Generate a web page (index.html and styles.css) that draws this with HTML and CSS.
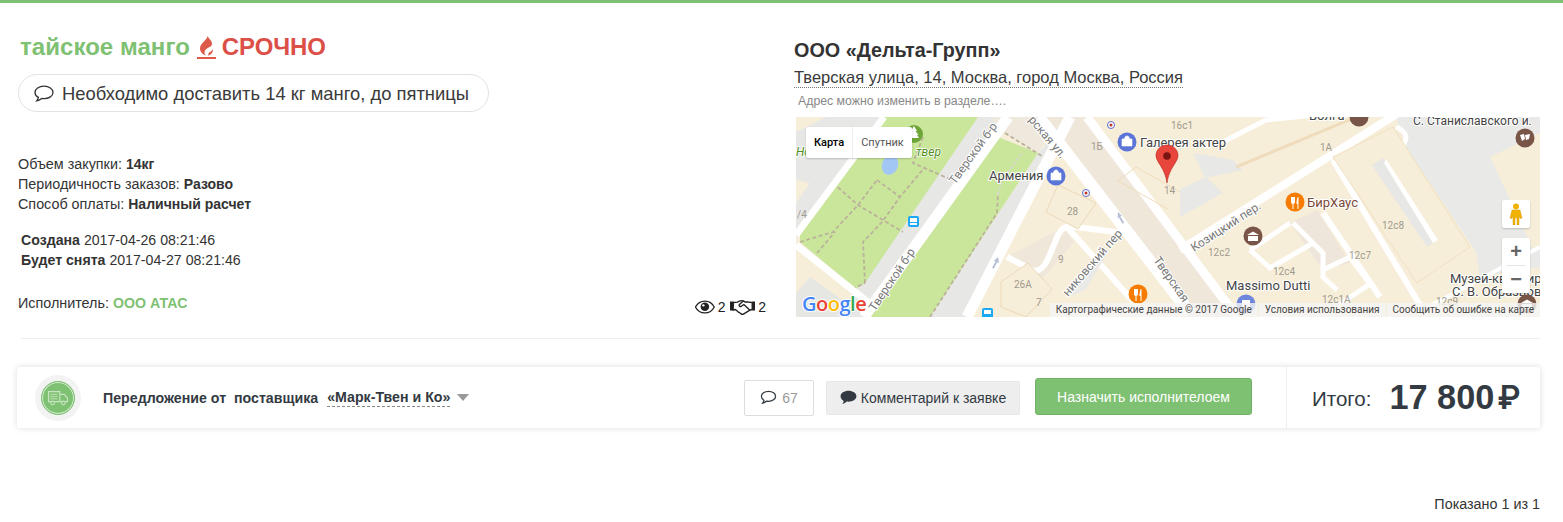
FILE: index.html
```html
<!DOCTYPE html>
<html lang="ru">
<head>
<meta charset="utf-8">
<title>тайское манго</title>
<link rel="stylesheet" href="styles.css">
</head>
<body>
<main class="page">
  <section class="order">
    <div class="order-info">
      <h1 class="title"><span class="title-name">тайское манго</span>
        <span class="flame-wrap"><svg class="flame" viewBox="0 0 16 20"><path d="M9.500 0C9.500 4 2 7 2 12.500 2 16 4.800 18.500 8 19.500 6 17.500 6 14.800 8 13.200 11 11 14 11 14 7.500 14 4.500 11 3 9.500 0z" fill="#dd5a4b"/><path d="M10 19.500c3-.4 5.200-2.800 5-6.500-.8 1.700-2.400 2.800-4 3.500-.5.900-.8 2-1 3z" fill="#dd5a4b"/></svg></span>
        <span class="urgent">СРОЧНО</span></h1>
      <div class="pill">
        <svg class="bubble" viewBox="0 0 20 18"><path d="M10 1.200c5 0 9 2.600 9 6.200s-4 6.200-9 6.200c-.8 0-1.600-.1-2.300-.2-1.200 1-2.800 2.100-5 2.500.8-1 1.500-2 1.700-3.500C2.300 11.300 1 9.500 1 7.400 1 3.800 5 1.200 10 1.200z" fill="none" stroke="#333" stroke-width="1.300"/></svg>
        <span class="pill-text">Необходимо доставить 14 кг манго, до пятницы</span>
      </div>
      <ul class="meta">
        <li>Объем закупки: <b>14кг</b></li>
        <li>Периодичность заказов: <b>Разово</b></li>
        <li>Способ оплаты: <b>Наличный расчет</b></li>
      </ul>
      <ul class="dates">
        <li><b>Создана</b> 2017-04-26 08:21:46</li>
        <li><b>Будет снята</b> 2017-04-27 08:21:46</li>
      </ul>
      <div class="performer-row">
        <div>Исполнитель: <a class="performer">ООО АТАС</a></div>
        <div class="stats">
          <svg class="eye" viewBox="0 0 20 14"><path d="M10 1C5.500 1 2 4 .5 7 2 10 5.500 13 10 13s8-3 9.500-6C18 4 14.500 1 10 1z" fill="none" stroke="#222" stroke-width="1.300"/><circle cx="10" cy="6.800" r="4.300" fill="#222"/><circle cx="8.500" cy="5.300" r="1.200" fill="#fff"/></svg>
          <span>2</span>
          <svg class="shake" viewBox="0 0 26 16"><path d="M0 2.500h3.500v9H0zM22.500 2.500H26v9h-3.500z" fill="#222"/><path d="M3.500 3.500l4-.5c2-1 4-2.200 6-1.200l2 1.200h3l4 .5v7l-2 .5-6.500 4c-1.200.8-2.500.3-3-.4l-2-1.100-3.500-3-2.500.5zM13.500 2l-4 3.500c-.8 1.200.6 2.500 2 1.800l2.500-1.800 6 5.500" fill="none" stroke="#222" stroke-width="1.400" stroke-linejoin="round"/></svg>
          <span>2</span>
        </div>
      </div>
    </div>
    <div class="order-place">
      <h2 class="company">ООО «Дельта-Групп»</h2>
      <div class="address">Тверская улица, 14, Москва, город Москва, Россия</div>
      <p class="note">Адрес можно изменить в разделе….</p>
      <div class="map">
        <svg class="map-svg" viewBox="0 0 744 200" width="744" height="200">
          <rect width="744" height="200" fill="#f7eed9"/>
          <!-- grey verges and pale blocks -->
          <path d="M0 150L70 200H0z" fill="#e6e6e2"/>
          <path d="M0 15L30 0H88L0 120z" fill="#e7e7e5"/>
          <path d="M0 63L14 66 0 86z" fill="#f7eed9"/>
          <path d="M60 172L182 0H212L68 200H40z" fill="#e7e7e5"/>
          <path d="M134 200L242 36 274 0 171 200z" fill="#e7e7e5"/>
          <path d="M195 0H262L242 36 205 14z" fill="#efe8dc"/>
          <path d="M243 0H291L441 200H394z" fill="#efe7da"/>
          <path d="M600 0H744V200H690L680 135 610 30z" fill="#e9e9e7"/>
          <path d="M694 40L744 16V130L738 135 720 95z" fill="#f7eed9"/>
          <path d="M625 190L680 160 744 150V200H640z" fill="#f7eed9"/>
          <path d="M397 36L437 43 447 53 409 61z" fill="#e8e8e6"/>
          <path d="M384 100L427 76 410 60 384 72z" fill="#e8e8e6"/>
          <path d="M211 140L267 110 278 125 244 165z" fill="#efe7da"/>
          <path d="M494 106L521 93 554 146 527 153z" fill="#eee6da"/>
          <!-- parks -->
          <path d="M88 0H182L69 166 60 172 4 125 4 118z" fill="#c9e69b"/>
          <path d="M202 20L242 36 134 200H74z" fill="#c9e69b"/>
          <ellipse cx="94" cy="48" rx="8" ry="10" fill="#a3c7f5" transform="rotate(20 94 48)"/>
          <!-- park paths -->
          <g fill="none" stroke="#bcb29a" stroke-width="1.800" stroke-dasharray="4 2.500">
            <path d="M4 125L37 115 62 88 81 63"/>
            <path d="M21 136L39 115"/>
            <path d="M37 66L62 88 107 115"/>
            <path d="M81 63L104 80"/>
            <path d="M69 166L67 125 86 105 104 80 129 50"/>
            <path d="M56 172L69 166"/>
            <path d="M127 20L117 46 156 63"/>
            <path d="M134 200L201 96 202 78"/>
            <path d="M209 16L249 41"/>
          </g>
          <path d="M202 78L206 63 227 35" fill="none" stroke="#d8d8d0" stroke-width="1.800" stroke-dasharray="3 2"/>
          <!-- white roads -->
          <g fill="none" stroke="#fff">
            <path d="M0 128L78 190" stroke-width="7"/>
            <path d="M0 118L88 0" stroke-width="7"/>
            <path d="M68 200L212 0" stroke-width="11"/>
            <path d="M171 200L274 0" stroke-width="11"/>
            <path d="M243 0L394 196" stroke-width="12"/>
            <path d="M291 0L441 200" stroke-width="9"/>
            <path d="M384 133L591 3 604 -5" stroke-width="8"/>
            <path d="M211 140L236 153C243 156 248 150 252 142L262 118C266 110 272 108 280 110L327 116" stroke-width="6"/>
            <path d="M271 110L351 200" stroke-width="6"/>
            <path d="M537 43L627 193" stroke-width="6"/>
            <path d="M527 96L584 180" stroke-width="6"/>
            <path d="M454 133L494 106" stroke-width="5"/>
            <path d="M454 133L474 151 517 126" stroke-width="5"/>
            <path d="M497 106L527 136 527 160 541 173" stroke-width="5"/>
            <path d="M527 153L554 140 574 167 544 187" stroke-width="5"/>
            <path d="M427 25L470 3 520 -2" stroke-width="5"/>
            <path d="M600 10C612 15 612 22 606 30" stroke-width="5"/>
            <path d="M627 193L744 130" stroke-width="4"/>
          </g>
          <path d="M0 146L14 160 0 176z" fill="#f7eed9"/>
          <!-- building with courtyard slot -->
          <path d="M537 40L597 10 674 130 621 166z" fill="#f7eed9" stroke="#f1dfc0"/>
          <path d="M576 48L587 41 641 123 631 130z" fill="#e7e7e5"/>
          <path d="M590 42L642 123 637 126 588 46z" fill="#fff"/>
          <path d="M384 75L340 50 322 64 372 92" fill="none" stroke="#efdcbc"/>
          <path d="M440 50L560 0" stroke="#efdcbc" stroke-width="3" fill="none"/>
          <path d="M262 68L300 86 282 112 250 95z" fill="#f7eed9" stroke="#ecd9b9"/>
          <path d="M205 165L232 146 256 172 230 200 205 190z" fill="#f7eed9" stroke="#ecd9b9"/>
          <path d="M298 142L312 135 290 172 274 180z" fill="#e9e9e7"/>
          <!-- labels -->
          <g class="m-label">
            <text class="m-small" x="295" y="33">1Б</text>
            <text class="m-small" x="271" y="98">28</text>
            <text class="m-small" x="218" y="171">26А</text>
            <text class="m-small" x="240" y="189">7</text>
            <text class="m-small" x="262" y="146">9</text>
            <text class="m-small" x="368" y="77">14</text>
            <text class="m-small" x="524" y="34">1А</text>
            <text class="m-small" x="586" y="112">12с8</text>
            <text class="m-small" x="553" y="142">12с7</text>
            <text class="m-small" x="412" y="139">12с2</text>
            <text class="m-small" x="477" y="158">12с4</text>
            <text class="m-small" x="526" y="186">12с1А</text>
            <text class="m-small" x="640" y="188">12с9</text>
            <text class="m-small" x="375" y="12">16с1</text>
            <text class="m-small" x="1" y="101">/4</text>
            <text class="m-poi" x="193" y="63">Армения</text>
            <text class="m-poi" x="344" y="30">Галерея актер</text>
            <text class="m-poi" x="513" y="3">Волга</text>
            <text class="m-poi m-brown" x="511" y="90">БирХаус</text>
            <text class="m-poi" x="430" y="173">Massimo Dutti</text>
            <text class="m-poi m-narrow" x="617" y="8">С. Станиславского и.</text>
            <text class="m-poi" x="654" y="166">Музей-квартира</text>
            <text class="m-poi" x="656" y="179">С. В. Образцова</text>
            <text class="m-green" x="120" y="39">твер</text>
            <text class="m-green" x="0" y="39">Но</text>
            <text class="m-street" transform="translate(79 195) rotate(-56)">Тверской б-р</text>
            <text class="m-street" transform="translate(159 68) rotate(-54)">Тверской б-р</text>
            <text class="m-street" transform="translate(232 3) rotate(50)">рская ул.</text>
            <text class="m-street" transform="translate(398 135) rotate(-33)">Козицкий пер.</text>
            <text class="m-street" transform="translate(357 143) rotate(55)">Тверская</text>
            <text class="m-street" transform="translate(272 180) rotate(-49)">никовский пер</text>
          </g>
          <!-- POI markers -->
          <circle cx="118" cy="17" r="9" fill="#6fa63a"/>
          <path d="M118 9l3 5h-1.500l3 4h-1.500l2 3h-10l2-3h-1.500l3-4h-1.500z" fill="#fff"/>
          <circle cx="260" cy="59" r="9.500" fill="#5b74d8"/><path d="M255 56h10v7h-10zM257.500 56c0-4 5-4 5 0" fill="#fff" stroke="#fff" stroke-width=".6"/>
          <circle cx="331" cy="25" r="9.500" fill="#5b74d8"/><path d="M326 22h10v7h-10zM328.500 22c0-4 5-4 5 0" fill="#fff" stroke="#fff" stroke-width=".6"/>
          <circle cx="450" cy="187" r="9.500" fill="#6f86dd"/><path d="M446 183h8v9h-8z" fill="#fff"/>
          <rect x="112" y="99" width="11" height="11" rx="2" fill="#1ca9f4"/><rect x="114" y="101" width="7" height="4" fill="#fff"/><path d="M114 106h7v2h-7z" fill="#fff"/>
          <rect x="186" y="191" width="11" height="11" rx="2" fill="#1ca9f4"/><rect x="188" y="193" width="7" height="4" fill="#fff"/>
          <circle cx="290" cy="76" r="3.500" fill="#fff" stroke="#5a6bd0"/><circle cx="290" cy="76" r="1.500" fill="#c0392b"/>
          <circle cx="315" cy="8" r="3.500" fill="#fff" stroke="#5a6bd0"/><circle cx="315" cy="8" r="1.500" fill="#c0392b"/>
          <circle cx="499" cy="85" r="9.500" fill="#f57c00"/><path d="M495 80v5c0 1 1 2 1.500 2v5h1v-5c.5 0 1.500-1 1.500-2v-5M502 80c-1 1-1.500 4-1.500 7h1v5h1V80z" fill="#fff"/>
          <circle cx="342" cy="177" r="9.500" fill="#f57c00"/><path d="M338 172v5c0 1 1 2 1.500 2v5h1v-5c.5 0 1.500-1 1.500-2v-5M345 172c-1 1-1.500 4-1.500 7h1v5h1v-12z" fill="#fff"/>
          <circle cx="457" cy="119" r="9.500" fill="#795548"/><path d="M451 118l6-3.500 6 3.500zM452 119h10v5h-10z" fill="#fff"/>
          <circle cx="563" cy="0" r="9.500" fill="#795548"/>
          <circle cx="729" cy="21" r="9.500" fill="#795548"/><path d="M724 18l4-1 1 5-3 2zM729 18l5-1-1 5-3 1z" fill="#fff"/>
          <circle cx="731" cy="187" r="9.500" fill="#795548"/><path d="M725 186l6-3.500 6 3.500zM726 187h10v5h-10z" fill="#fff"/>
          <!-- one-way arrows -->
          <path d="M322 95l4 4-1.800.2 4 6.500-1.700 1-3.800-6.500-1.200 1.200z" fill="#b7bfd6"/>
          <path d="M202 140l1 6-1.800-.7-3.400 6.500-1.700-1 3.400-6.300-1.700-.5z" fill="#b7bfd6"/>
          <!-- pin -->
          <path d="M371 28c-6.500 0-11 5-11 10.500 0 7 9 12 11 27.500 2-15.500 11-20.500 11-27.500C382 33 377.500 28 371 28z" fill="#e8453c" stroke="#b3261e" stroke-width=".6"/>
          <circle cx="371" cy="39" r="3.800" fill="#7a1410"/>
          <!-- Google -->
          <text class="m-google" x="6" y="194"><tspan fill="#4285f4">G</tspan><tspan fill="#ea4335">o</tspan><tspan fill="#fbbc05">o</tspan><tspan fill="#4285f4">g</tspan><tspan fill="#34a853">l</tspan><tspan fill="#ea4335">e</tspan></text>
        </svg>
        <div class="map-type">
          <span class="map-tab map-tab-on">Карта</span><span class="map-tab">Спутник</span>
        </div>
        <div class="pegman">
          <svg viewBox="0 0 14 22" width="14" height="22"><circle cx="7" cy="3.500" r="3" fill="#f2b300"/><path d="M3 7h8l2 8-2 .5-1-3V22H8v-7H6v7H4V12.500l-1 3-2-.5z" fill="#f2b300" stroke="#c98f00" stroke-width=".4"/></svg>
        </div>
        <div class="zoom-box">
          <span class="zoom-btn">+</span>
          <span class="zoom-sep"></span>
          <span class="zoom-btn">−</span>
        </div>
        <div class="attrib">
          <span>Картографические данные © 2017 Google</span>
          <span>Условия использования</span>
          <span>Сообщить об ошибке на карте</span>
        </div>
      </div>
    </div>
  </section>
  <hr class="rule">
  <section class="offer">
    <div class="offer-main">
      <div class="truck-badge">
        <div class="truck-ring">
          <svg viewBox="0 0 24 20" width="22" height="18"><path d="M1.500 3h12.500v11H1.500zM14 6h5l3.500 4v4H14z" fill="none" stroke="#c8e4c0" stroke-width="1.300"/><path d="M3.500 6h8M3.500 8.500h8M3.500 11h8" stroke="#c8e4c0"/><circle cx="6" cy="15.500" r="2" fill="#7fc173" stroke="#c8e4c0" stroke-width="1.200"/><circle cx="18" cy="15.500" r="2" fill="#7fc173" stroke="#c8e4c0" stroke-width="1.200"/></svg>
        </div>
      </div>
      <div class="offer-text">Передложение от&nbsp; поставщика</div>
      <a class="supplier">«Марк-Твен и Ко»</a>
      <span class="caret"></span>
      <div class="actions">
        <button class="btn btn-count">
          <svg class="btn-icon" viewBox="0 0 20 18"><path d="M10 1.500c4.800 0 8.500 2.500 8.500 6s-3.700 6-8.500 6c-.8 0-1.500-.1-2.200-.2-1.100 1-2.600 2-4.800 2.400.8-1 1.300-2 1.500-3.300C2.700 11.200 1.500 9.500 1.500 7.500c0-3.500 3.700-6 8.500-6z" fill="none" stroke="#333a42" stroke-width="1.500"/></svg>
          67
        </button>
        <button class="btn btn-comment">
          <svg class="btn-icon" viewBox="0 0 20 18"><path d="M10 1c5 0 9.500 2.700 9.500 6.500S15 14 10 14c-.8 0-1.500-.1-2.200-.2C6.700 15 5 16.300 2.500 16.800c1-1.200 1.600-2.300 1.800-3.700C2 11.900.5 9.800.5 7.500.5 3.700 5 1 10 1z" fill="#333a42"/></svg>
          Комментарий к заявке
        </button>
        <button class="btn btn-assign">Назначить исполнителоем</button>
      </div>
    </div>
    <div class="offer-total">
      <span class="total-label">Итого:</span>
      <span class="total-sum">17 800</span>
      <span class="total-cur">₽</span>
    </div>
  </section>
  <div class="summary">Показано 1 из 1</div>
</main>
</body>
</html>
```
FILE: styles.css
```css
* { box-sizing: border-box; }
html, body { margin: 0; padding: 0; }
body {
  border-top: 3px solid #7fc173;
  background: #fff;
  color: #333;
  font-family: "Liberation Sans", Arial, sans-serif;
  font-size: 14.35px;
  height: 522px;
  overflow: hidden;
}
.page { padding: 30px 23px 0 17px; }
.order { display: flex; }
.order-info { width: 749px; padding-left: 1px; flex: none; }
.order-place { margin-left: 28px; width: 747px; flex: none; }

.title { margin: 0; height: 28px; font-size: 24px; line-height: 28px; font-weight: 700; white-space: nowrap; display: flex; align-items: center; padding-left: 2px; }
.title-name { color: #7fc173; letter-spacing: .05px; }
.flame-wrap { display: inline-flex; margin-left: 7px; border-bottom: 2px solid #dd5a4b; width: 19px; justify-content: center; height: 24px; }
.flame { width: 16px; height: 20px; margin-top: 1px; }
.urgent { color: #dc4f47; font-weight: 700; margin-left: 6px; letter-spacing: -.1px; }

.pill { margin-top: 13px; width: 471px; height: 38px; border: 1px solid #e3e3e3; border-radius: 19px; font-size: 18.4px; color: #3a3a3a; display: flex; align-items: center; padding: 2px 0 0 15px; gap: 8px; white-space: nowrap; }
.bubble { width: 20px; height: 18px; flex: none; }

.meta, .dates { list-style: none; margin: 0; padding: 0; line-height: 20px; }
.meta { margin-top: 42px; }
.meta b { font-size: 14px; }
.dates { margin-top: 16px; padding-left: 3px; font-size: 14.15px; }
.performer-row { margin-top: 23px; height: 20px; line-height: 20px; display: flex; justify-content: space-between; }
.performer { color: #7fc173; font-weight: 700; font-size: 14.2px; }
.stats { display: flex; align-items: center; gap: 3px; margin-top: 4px; height: 20px; width: 71px; color: #222; font-size: 14px; }
.eye { width: 20px; height: 14px; }
.shake { width: 26px; height: 16px; margin-left: 1px; }

.company { margin: 6px 0 0; font-size: 19.8px; line-height: 22px; font-weight: 700; color: #333; }
.address { margin-top: 5px; width: fit-content; height: 22px; line-height: 23px; font-size: 16.5px; border-bottom: 1px dotted #777; color: #3a3a3a; white-space: nowrap; }
.note { margin: 5px 0 0 4px; font-size: 12.3px; line-height: 16px; color: #888; }
.map { margin: 8px 0 0 2px; width: 744px; height: 200px; position: relative; overflow: hidden; background: #f7eed9; }
.map-svg { display: block; }
.m-label text { font-family: Roboto, "Liberation Sans", sans-serif; }
.m-small { font-size: 10px; fill: #a09a90; }
.m-poi { font-size: 13px; fill: #444; paint-order: stroke; stroke: #fff; stroke-width: 2px; }
.m-narrow { font-size: 12px; }
.m-brown { fill: #7a4a38; }
.m-green { font-size: 12px; fill: #4f8f1c; font-style: italic; paint-order: stroke; stroke: #fff; stroke-width: 1.5px; }
.m-street { font-size: 12px; fill: #777; paint-order: stroke; stroke: #fff; stroke-width: 2px; }
.m-google { font-family: "Open Sans", sans-serif; font-size: 20px; font-weight: 600; paint-order: stroke; stroke: #fff; stroke-width: 2px; letter-spacing: -.5px; }

.map-type { position: absolute; left: 10px; top: 10px; display: flex; height: 31px; background: #fff; box-shadow: 0 1px 2px rgba(0,0,0,.2); border-radius: 2px; font-family: Roboto, sans-serif; font-size: 11px; line-height: 31px; }
.map-tab { padding: 0 8px; color: #555; border-left: 1px solid #eee; }
.map-tab-on { color: #000; font-weight: 500; border-left: 0; }
.pegman { position: absolute; left: 706px; top: 83px; width: 28px; height: 28px; background: #fff; border-radius: 2px; box-shadow: 0 1px 2px rgba(0,0,0,.2); display: flex; align-items: center; justify-content: center; }
.zoom-box { position: absolute; left: 706px; top: 121px; width: 28px; height: 55px; background: #fff; border-radius: 2px; box-shadow: 0 1px 2px rgba(0,0,0,.2); display: flex; flex-direction: column; align-items: center; }
.zoom-btn { height: 27px; line-height: 26px; font-size: 20px; font-weight: 700; color: #666; }
.zoom-sep { width: 20px; height: 1px; background: #e6e6e6; flex: none; }
.attrib { position: absolute; right: 0; bottom: 0; height: 14px; display: flex; font-family: Roboto, sans-serif; font-size: 10px; line-height: 14px; color: #444; white-space: nowrap; }
.attrib span { background: rgba(245,245,245,.8); padding: 0 6px; margin-left: 1px; }

.rule { margin: 21px 0 0 4px; border: 0; border-top: 1px solid #eee; width: 1519px; height: 0; }

.offer { margin-top: 28px; width: 1523px; height: 61px; display: flex; border-radius: 3px; background: #fff; box-shadow: 0 0 6px rgba(0,0,0,.14); }
.offer-main { flex: none; width: 1270px; display: flex; align-items: center; padding-left: 18px; border-right: 1px solid #eee; }
.truck-badge { width: 46px; height: 46px; border-radius: 50%; background: #f3f3f3; display: flex; align-items: center; justify-content: center; flex: none; }
.truck-ring { width: 34px; height: 34px; border-radius: 50%; background: #7fc173; border: 1px solid #7fc173; box-shadow: inset 0 0 0 1px #d8ecd2; display: flex; align-items: center; justify-content: center; }
.offer-text { margin-left: 22px; font-size: 14.2px; font-weight: 700; color: #333a42; white-space: nowrap; }
.supplier { margin-left: 9px; font-size: 14.2px; font-weight: 700; color: #333a42; border-bottom: 1px dashed #888; line-height: 17px; white-space: nowrap; }
.caret { margin-left: 7px; width: 0; height: 0; border-left: 6px solid transparent; border-right: 6px solid transparent; border-top: 7px solid #999; flex: none; }
.actions { margin-left: auto; margin-right: 34px; display: flex; align-items: center; }
.btn { font-family: inherit; font-size: 14px; display: flex; align-items: center; justify-content: center; border-radius: 2px; padding: 0; white-space: nowrap; }
.btn-icon { width: 17px; height: 15px; flex: none; }
.btn-count { width: 70px; height: 36px; background: #fff; border: 1px solid #ddd; color: #999; gap: 5px; }
.btn-comment { width: 194px; height: 34px; margin-left: 12px; background: #eee; border: 1px solid #e8e8e8; color: #333a42; gap: 4px; }
.btn-assign { width: 217px; height: 37px; margin: 0 0 2px 15px; background: #7fc173; border: 1px solid #72b266; border-radius: 3px; color: #fff; }
.offer-total { flex: 1; display: flex; align-items: center; padding-left: 25px; color: #333a42; white-space: nowrap; }
.total-label { font-size: 20.5px; margin-top: 3px; }
.total-sum { margin-left: 18px; font-size: 34.3px; font-weight: 700; }
.total-cur { margin-left: 3px; font-family: Inter, sans-serif; font-size: 32px; font-weight: 600; }

.summary { margin-top: 66px; line-height: 20px; text-align: right; color: #333; width: 1523px; }
```
